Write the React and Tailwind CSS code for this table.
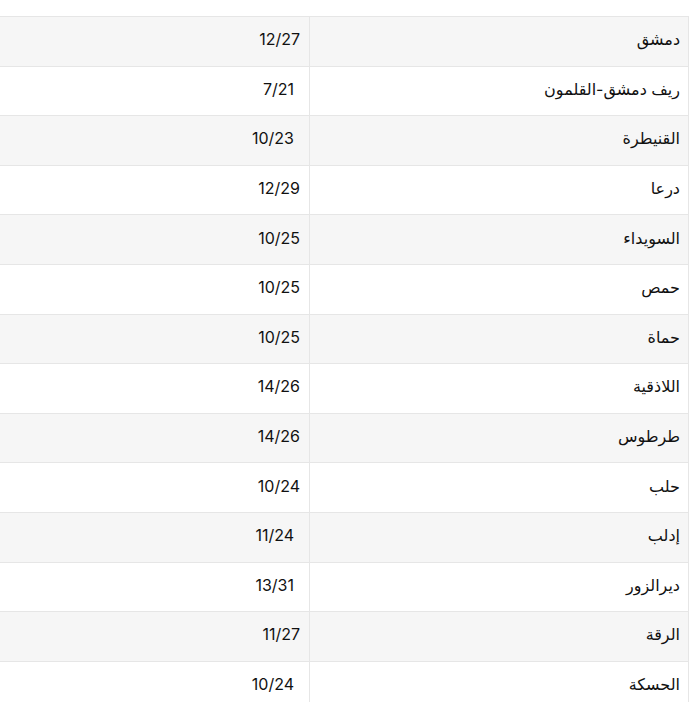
import React from "react";

const rows = [
  { city: "دمشق", temp: "12/27" },
  { city: "ريف دمشق-القلمون", temp: "7/21", shift: true },
  { city: "القنيطرة", temp: "10/23", shift: true },
  { city: "درعا", temp: "12/29" },
  { city: "السويداء", temp: "10/25" },
  { city: "حمص", temp: "10/25" },
  { city: "حماة", temp: "10/25" },
  { city: "اللاذقية", temp: "14/26" },
  { city: "طرطوس", temp: "14/26" },
  { city: "حلب", temp: "10/24" },
  { city: "إدلب", temp: "11/24", shift: true },
  { city: "ديرالزور", temp: "13/31", shift: true },
  { city: "الرقة", temp: "11/27" },
  { city: "الحسكة", temp: "10/24", shift: true },
];

export default function App() {
  return (
    <div
      dir="rtl"
      className="w-[692px] h-[702px] overflow-hidden bg-white text-[#111] text-[16px]"
      style={{ fontFamily: "Inter, 'Noto Sans', 'DejaVu Sans', sans-serif" }}
    >
      <div className="h-4"></div>
      <div className="w-[689px] mr-[3px] border-t border-r border-[#e6e6e6]">
        {rows.map((r, i) => (
          <div
            key={r.city}
            className={
              "flex h-[49.6px] border-b border-[#e6e6e6] " +
              (i % 2 === 0 ? "bg-[#f6f6f6]" : "bg-white")
            }
          >
            <div className="w-[379px] border-l border-[#e6e6e6] pr-2 flex items-center pb-1">
              {r.city}
            </div>
            <div
              className={
                "flex-1 flex items-center pb-1 " + (r.shift ? "pr-[15px]" : "pr-[9px]")
              }
            >
              {r.temp}
            </div>
          </div>
        ))}
      </div>
    </div>
  );
}
